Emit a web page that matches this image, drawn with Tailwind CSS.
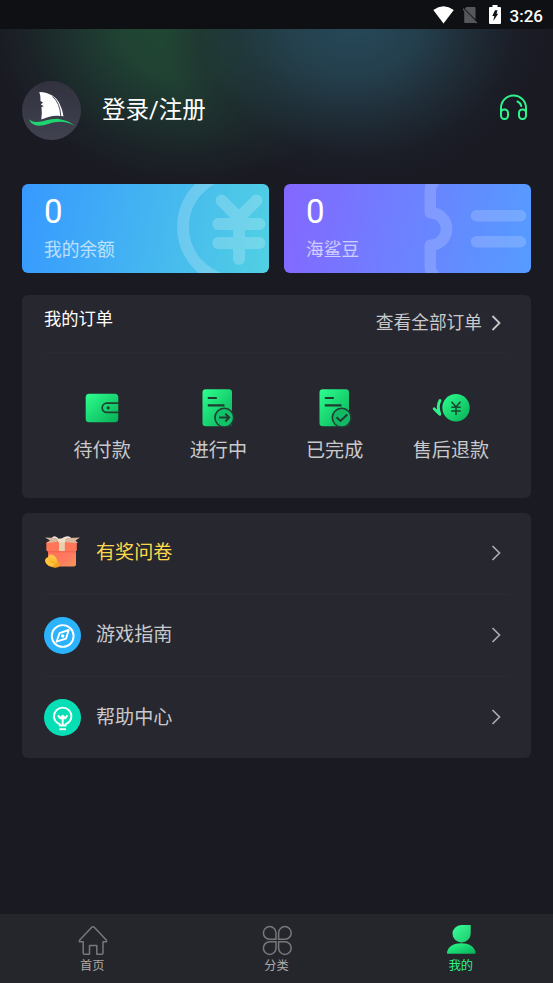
<!DOCTYPE html>
<html lang="zh-CN">
<head>
<meta charset="utf-8">
<title>我的</title>
<script src="https://cdn.jsdelivr.net/npm/@tailwindcss/browser@4"></script>
</head>
<body class="bg-[#1a1a23]">
<div class="w-[553px] h-[983px] flex flex-col overflow-hidden bg-[#1a1a23] bg-[radial-gradient(ellipse_195px_165px_at_355px_20px,#26495a_0%,#254250e6_35%,#21343fb3_60%,#1d252e66_82%,#1a1a2300_100%),radial-gradient(ellipse_195px_165px_at_185px_20px,#214a33_0%,#204233_35%,#1d312e_60%,#1b2227_83%,#1a1a23_100%)] font-['Roboto','Noto_Sans_CJK_SC',sans-serif] text-[#c9c9cb]">

  <!-- Status bar -->
  <div class="h-[29px] shrink-0 bg-[#0f1013] flex items-center justify-end pr-[10px]">
    <svg class="w-[22px] h-[18px] mr-[8px]" viewBox="0 0 22 18"><path d="M.3 4Q10.500-3.400 20.800 4L10.500 17.500Z" fill="#fff"/></svg>
    <svg class="w-[16px] h-[18px] mr-[10px]" viewBox="0 0 16 18"><path d="M3.500 1H11.500Q12.500 1 12.500 2V13.600L1.800 2.700ZM1.200 4.800L13.300 16.700Q13 17 12 17H2.200Q1.200 17 1.200 16Z" fill="#56575a"/><path d="M-.8 2.200L13.800 17" stroke="#56575a" stroke-width="1.300"/></svg>
    <svg class="w-[12px] h-[19px] mr-[9px]" viewBox="0 0 12 19"><path d="M3.500 0H8.500V2H11Q12 2 12 3V18Q12 19 11 19H1Q0 19 0 18V3Q0 2 1 2H3.500Z" fill="#fff"/><path d="M6 5.200H8.500L7.500 8.700H9.200L4.300 16L5.300 11H3.300Z" fill="#0f1013"/></svg>
    <span class="text-[17px] leading-[20px] font-medium text-white pt-[2px]">3:26</span>
  </div>

  <!-- Profile -->
  <header class="h-[155px] shrink-0 flex items-center pl-[22px] pr-[25px] pt-[8px]">
    <svg class="w-[59px] h-[59px]" viewBox="0 0 59 59">
      <defs><linearGradient id="av" x1="0" y1="0" x2="0" y2="1"><stop stop-color="#31323e"/><stop offset="1" stop-color="#414250"/></linearGradient></defs>
      <circle cx="29.500" cy="29.500" r="29.500" fill="url(#av)"/>
      <path d="M17.300 11C28 11.500 34.500 16 37.500 22.500Q40.500 28.500 41.500 35.200C32 33.500 25 36 19.300 38.500Q20.200 31 19.500 26L21.800 25.300L18.800 23.600L21 21.600L18.500 20Q18.900 15 17.300 11Z" fill="#fff"/>
      <path d="M30.500 15.500Q38 21.500 38.800 35" fill="none" stroke="#50515d" stroke-width="1"/>
      <path d="M7 38.300C15 45.500 27 36 38 38.200C44 39.300 48.500 41 53 45C44 39.800 36 39.800 27 42.700C17 46 10 45.500 7 38.300Z" fill="#1fd56f"/>
    </svg>
    <span class="ml-[21px] text-[23.500px] leading-[32px] text-white -mt-px">登录/注册</span>
    <svg class="ml-auto w-[29px] h-[28px] -mt-[5px]" viewBox="0 0 29 28" fill="none" stroke="#2df58b" stroke-width="2">
      <path d="M2 20V14A12.500 12.500 0 0 1 27 14V20"/><rect x="2" y="15.500" width="7" height="9.500" rx="3.200"/><rect x="20" y="15.500" width="7" height="9.500" rx="3.200"/><path d="M18.500 7.500Q21.500 9 22.300 12" stroke-linecap="round"/>
    </svg>
  </header>

  <!-- Balances -->
  <section class="shrink-0 grid grid-cols-2 gap-[15px] px-[22px]">
    <div class="grid h-[89px] rounded-[6px] overflow-hidden bg-[linear-gradient(100deg,#3799ff,#51d0e3)]">
      <svg class="col-start-1 row-start-1 w-[247px] h-[89px]" viewBox="0 0 247 89"><g opacity=".2" fill="none" stroke="#fff" stroke-width="11.800" stroke-linecap="round" stroke-linejoin="round"><path d="M215.500-11.500A54.500 54.500 0 0 0 215.500 97.500"/><path d="M199.500 16.500L217 34L234.500 16.500M217 34V75M196.200 40H237.500M196.200 59H237.500"/></g></svg>
      <div class="col-start-1 row-start-1 pl-[22px] pt-[8px] flex flex-col">
        <span class="text-[33px] leading-[40px] text-white">0</span>
        <span class="text-[17.700px] leading-[24px] text-white/65 mt-[6px]">我的余额</span>
      </div>
    </div>
    <div class="grid h-[89px] rounded-[6px] overflow-hidden bg-[linear-gradient(100deg,#8467ff,#559cff)]">
      <svg class="col-start-1 row-start-1 w-[247px] h-[89px]" viewBox="0 0 247 89"><g opacity=".17" fill="none" stroke="#fff" stroke-width="11.500" stroke-linecap="round" stroke-linejoin="round"><path d="M154-6Q146.300-1 146.300 7V28.700A16.300 16.300 0 0 1 146.300 61.300V82Q146.300 90 154 95"/><path d="M192.500 31.700H236.500M192.500 57.700H236.500"/></g></svg>
      <div class="col-start-1 row-start-1 pl-[22px] pt-[8px] flex flex-col">
        <span class="text-[33px] leading-[40px] text-white">0</span>
        <span class="text-[17.700px] leading-[24px] text-white/65 mt-[6px]">海鲨豆</span>
      </div>
    </div>
  </section>

  <!-- Orders -->
  <section class="shrink-0 mx-[22px] mt-[22px] h-[202.500px] rounded-[6px] bg-[#272730] px-[22px]">
    <div class="h-[58px] flex justify-between border-b border-[#2a2a33]">
      <span class="text-[17.300px] leading-[24px] text-white pt-[12px]">我的订单</span>
      <div class="flex pt-[16px] pr-[7px]">
        <span class="text-[17.700px] leading-[24px]">查看全部订单</span>
        <svg class="w-[11px] h-[16px] ml-[9px] mt-[4px]" viewBox="0 0 11 16" fill="none" stroke="#c9c9cb" stroke-width="1.800"><path d="M1.500 1L8.500 8L1.500 15"/></svg>
      </div>
    </div>
    <div class="grid grid-cols-4 pt-[35px] text-[19.100px] leading-[26px] text-center">
      <div class="flex flex-col items-center gap-[9.500px]">
        <svg class="w-[40px] h-[40px]" viewBox="0 0 40 40">
          <defs><linearGradient id="g" x1="0" y1="0" x2="1" y2="1"><stop stop-color="#2dff8f"/><stop offset="1" stop-color="#07af56"/></linearGradient></defs>
          <rect x="3.700" y="5.700" width="32.600" height="28.500" rx="3.500" fill="url(#g)"/><path d="M37 15.200H24.800A4.600 4.600 0 0 0 24.800 24.400H37" fill="none" stroke="#20402f" stroke-width="1.700"/><circle cx="26.200" cy="19.800" r="1.600" fill="#20402f"/>
        </svg>
        <span>待付款</span>
      </div>
      <div class="flex flex-col items-center gap-[9.500px]">
        <svg class="w-[40px] h-[40px]" viewBox="0 0 40 40"><rect x="4.500" y="1.200" width="29.500" height="37" rx="3.200" fill="url(#g)"/><path d="M9.800 10H18.800M9.800 17.400H26.500" stroke="#203c30" stroke-width="2.200"/><circle cx="26.300" cy="29.600" r="9.400" fill="#12c268" stroke="#243c35" stroke-width="1.600"/><path d="M21 29.600H31M27.300 25.700L31.200 29.600L27.300 33.500" fill="none" stroke="#203c30" stroke-width="2"/></svg>
        <span>进行中</span>
      </div>
      <div class="flex flex-col items-center gap-[9.500px]">
        <svg class="w-[40px] h-[40px]" viewBox="0 0 40 40"><rect x="4.500" y="1.200" width="29.500" height="37" rx="3.200" fill="url(#g)"/><path d="M9.800 10H18.800M9.800 17.400H26.500" stroke="#203c30" stroke-width="2.200"/><circle cx="26.700" cy="29.600" r="9.400" fill="#12b965" stroke="#243c35" stroke-width="1.600"/><path d="M21.500 29.300L25.500 33L32.300 26.500" fill="none" stroke="#203c30" stroke-width="2"/></svg>
        <span>已完成</span>
      </div>
      <div class="flex flex-col items-center gap-[9.500px]">
        <svg class="w-[40px] h-[40px]" viewBox="0 0 40 40"><circle cx="25" cy="19.700" r="13.700" fill="url(#g)"/><path d="M20.500 13.800L25 18.700L29.500 13.800M25 18.700V27M20.300 19.300H29.700M20.300 23H29.700" fill="none" stroke="#174a31" stroke-width="1.600"/><path d="M9 12.500Q5.800 18 8.800 26.300L3.200 20.700" fill="none" stroke="#2df58b" stroke-width="2.900" stroke-linecap="round" stroke-linejoin="round"/></svg>
        <span>售后退款</span>
      </div>
    </div>
  </section>

  <!-- Menu -->
  <section class="shrink-0 mx-[22px] mt-[15px] h-[245.500px] rounded-[6px] bg-[#272730] px-[22px] text-[19.100px] leading-[26px]">
    <div class="h-[82px] flex items-center border-b border-[#2b2b34] pr-[7.500px]">
      <svg class="w-[37px] h-[37px] -mt-[3px]" viewBox="0 0 37 37">
        <defs><linearGradient id="gift" x1="0" y1="0" x2="1" y2="1"><stop stop-color="#ff7254"/><stop offset=".6" stop-color="#ff7a61"/><stop offset="1" stop-color="#f39a58"/></linearGradient><linearGradient id="coin" x1="0" y1="0" x2="1" y2="1"><stop stop-color="#ffdb58"/><stop offset="1" stop-color="#f7a51d"/></linearGradient></defs>
        <path d="M6.500 7Q8 3 11 3.200Q14 4 16 7.500Q19 3.500 23 3.200Q27 3 28.500 7.500Z" fill="#ece1d7"/>
        <path d="M9.500 6.500Q11 4 13.500 7ZM21 7Q24 4 26.500 7Z" fill="#5c5350"/>
        <rect x="4" y="15" width="28" height="18.500" rx="2.500" fill="url(#gift)"/>
        <rect x="2.300" y="8.500" width="30.500" height="10" rx="1.800" fill="#ff7658"/>
        <path d="M4 18.800H32" stroke="#e85d4e" stroke-width=".8"/>
        <path d="M16.500 8L11 5L1 4.500L6 7.500L3 10L12 9ZM19 8L25 5L36 4.500L31.500 7.500L34 10L24 9.500Z" fill="#d9b89c"/>
        <rect x="15" y="7" width="5.800" height="11" fill="#ead1ae"/><rect x="14" y="5.500" width="7.500" height="4" rx="1.500" fill="#f2dfc8"/>
        <ellipse cx="10.500" cy="31" rx="5.500" ry="3.600" fill="#f5a422" transform="rotate(12 10.500 31)"/><ellipse cx="5.800" cy="28.800" rx="5.200" ry="4" fill="#ffc438" transform="rotate(40 5.800 28.800)"/><ellipse cx="8.800" cy="26.300" rx="5.500" ry="3.500" fill="url(#coin)" transform="rotate(48 8.800 26.300)"/>
      </svg>
      <span class="ml-[15px] text-[#ffd94c]">有奖问卷</span>
      <svg class="ml-auto w-[11px] h-[16px] -mt-px" viewBox="0 0 11 16" fill="none" stroke="#aaaaae" stroke-width="1.700"><path d="M1.500 1L8.500 8L1.500 15"/></svg>
    </div>
    <div class="h-[82px] flex items-center border-b border-[#2b2b34] pr-[7.500px]">
      <svg class="w-[37px] h-[37px]" viewBox="0 0 37 37"><circle cx="18.500" cy="18.500" r="18.500" fill="#2bb3fd"/><g fill="none" stroke="#fff" stroke-width="1.900" stroke-linejoin="round"><circle cx="18.700" cy="19" r="10.900"/><path d="M24.700 13L22 21.700L12.500 24.700L15.500 16.200Z"/><circle cx="18.700" cy="18.900" r=".8"/></g></svg>
      <span class="ml-[15px]">游戏指南</span>
      <svg class="ml-auto w-[11px] h-[16px] -mt-px" viewBox="0 0 11 16" fill="none" stroke="#aaaaae" stroke-width="1.700"><path d="M1.500 1L8.500 8L1.500 15"/></svg>
    </div>
    <div class="h-[82px] flex items-center pr-[7.500px]">
      <svg class="w-[37px] h-[37px] -mt-px" viewBox="0 0 37 37"><circle cx="18.500" cy="18.500" r="18.500" fill="#06dfb5"/><g fill="none" stroke="#fff" stroke-width="1.900" stroke-linejoin="round"><path d="M15.700 26.500V25.200C11.800 23.500 10 20.500 10 17.300A8.700 8.700 0 0 1 27.400 17.300C27.400 20.500 25.500 23.500 21.700 25.200V26.500Z"/><path d="M14 16.200L16 19.300L18.700 16.800L21.400 19.300L23.400 16.200M16 19.300H21.400M18.700 19.300V26"/><path d="M15.500 30.200H22"/></g></svg>
      <span class="ml-[15px]">帮助中心</span>
      <svg class="ml-auto w-[11px] h-[16px] -mt-px" viewBox="0 0 11 16" fill="none" stroke="#aaaaae" stroke-width="1.700"><path d="M1.500 1L8.500 8L1.500 15"/></svg>
    </div>
  </section>

  <!-- Tab bar -->
  <nav class="mt-auto h-[69px] shrink-0 bg-[#25262b] grid grid-cols-3 pt-[10px] text-[12.200px] leading-[16px] text-[#aaaaad]">
    <div class="flex flex-col items-center">
      <svg class="w-[32px] h-[32px] ml-px" viewBox="0 0 32 32" fill="none" stroke="#77787c" stroke-width="1.500" stroke-linejoin="round"><path d="M14.500 3.400Q16 2.200 17.500 3.400L29.500 16.300V17.700H26V29Q26 30.300 24.700 30.300H19.800V21.500H12.500V30.300H7.500Q6.200 30.300 6.200 29V17.700H2.500V16.300Z"/></svg>
      <span class="mt-[1.500px]">首页</span>
    </div>
    <div class="flex flex-col items-center">
      <svg class="w-[32px] h-[32px] ml-px" viewBox="0 0 32 32" fill="none" stroke="#77787c" stroke-width="1.500"><path d="M15 15.200H8.700A6.300 6.300 0 1 1 15 8.900Z"/><path d="M17.600 15.200H23.900A6.300 6.300 0 1 0 17.600 8.900Z"/><path d="M15 17.800H8.700A6.300 6.300 0 1 0 15 24.100Z"/><path d="M17.600 17.800H23.900A6.300 6.300 0 1 1 17.600 24.100Z"/></svg>
      <span class="mt-[1.500px]">分类</span>
    </div>
    <div class="flex flex-col items-center text-[#2df58b]">
      <svg class="w-[32px] h-[32px]" viewBox="0 0 32 32"><defs><linearGradient id="me" x1="0" y1="0" x2="1" y2="1"><stop stop-color="#3aff9b"/><stop offset="1" stop-color="#1dc96b"/></linearGradient></defs><path d="M16.300 1H25.700V9.700A9.100 8.700 0 1 1 16.300 1Z" fill="url(#me)"/><path d="M2.500 29.700Q1.700 29.700 2 28C3.500 22.500 8.500 19.300 16.300 19.300S29 22.500 30.500 28Q30.700 29.700 29.900 29.700Z" fill="url(#g)"/></svg>
      <span class="mt-[1.500px]">我的</span>
    </div>
  </nav>
</div>
</body>
</html>
